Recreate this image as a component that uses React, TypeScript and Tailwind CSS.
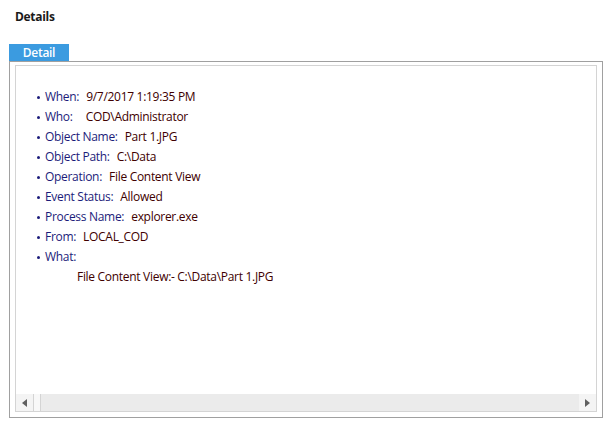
const rows: { label: string; value: string; gap?: string }[] = [
  { label: 'When:', value: '9/7/2017 1:19:35 PM' },
  { label: 'Who:', value: 'COD\\Administrator', gap: 'ml-[13px]' },
  { label: 'Object Name:', value: 'Part 1.JPG' },
  { label: 'Object Path:', value: 'C:\\Data' },
  { label: 'Operation:', value: 'File Content View' },
  { label: 'Event Status:', value: 'Allowed' },
  { label: 'Process Name:', value: 'explorer.exe' },
  { label: 'From:', value: 'LOCAL_COD' },
  { label: 'What:', value: '' },
]

export default function App() {
  return (
    <div className="w-[612px] h-[430px] bg-white text-[12px] tracking-[-0.3px] font-['Open_Sans',sans-serif] overflow-hidden">
      <h1 className="pl-[15px] pt-[9px] h-[44px] font-bold text-[#1a1a1a] text-[12px] leading-[16px]">Details</h1>

      {/* Tab */}
      <div className="ml-[9px] w-[60px] h-[17px] bg-[#3b9be0] text-white font-semibold text-center leading-[17px]">
        Detail
      </div>

      {/* Tab panel */}
      <div className="ml-[9px] w-[594px] h-[357px] border border-[#a0a0a0] pl-[5px] pr-[5px] pt-[3px] pb-[5px]">
        <div className="h-full border border-[#d4d4d4] flex flex-col">
          <div className="flex-1 pt-[21px] pl-[21px]">
            {rows.map((r) => (
              <div key={r.label} className="h-[20px] flex items-center">
                <span className="w-[3px] h-[3px] rounded-full bg-[#1c1c7a] mr-[5px]" />
                <span className="text-[#1c1c7a]">{r.label}</span>
                {r.value && <span className={`${r.gap ?? 'ml-[7px]'} text-[#400000]`}>{r.value}</span>}
              </div>
            ))}
            <div className="h-[20px] flex items-center pl-[40px] text-[#400000]">
              File Content View:- C:\Data\Part 1.JPG
            </div>
          </div>

          {/* Horizontal scrollbar */}
          <div className="h-[17px] bg-[#ebebeb] flex">
            <div className="w-[17px] h-full bg-[#f4f4f4] flex items-center justify-center">
              <svg width="5" height="8" viewBox="0 0 5 8"><path d="M5 0 L0 4 L5 8 Z" fill="#606060" /></svg>
            </div>
            <div className="w-[8px] h-full bg-[#f8f8f8] border-x border-[#d4d4d4]" />
            <div className="flex-1" />
            <div className="w-[17px] h-full bg-[#f4f4f4] flex items-center justify-center">
              <svg width="5" height="8" viewBox="0 0 5 8"><path d="M0 0 L5 4 L0 8 Z" fill="#606060" /></svg>
            </div>
          </div>
        </div>
      </div>
    </div>
  )
}
